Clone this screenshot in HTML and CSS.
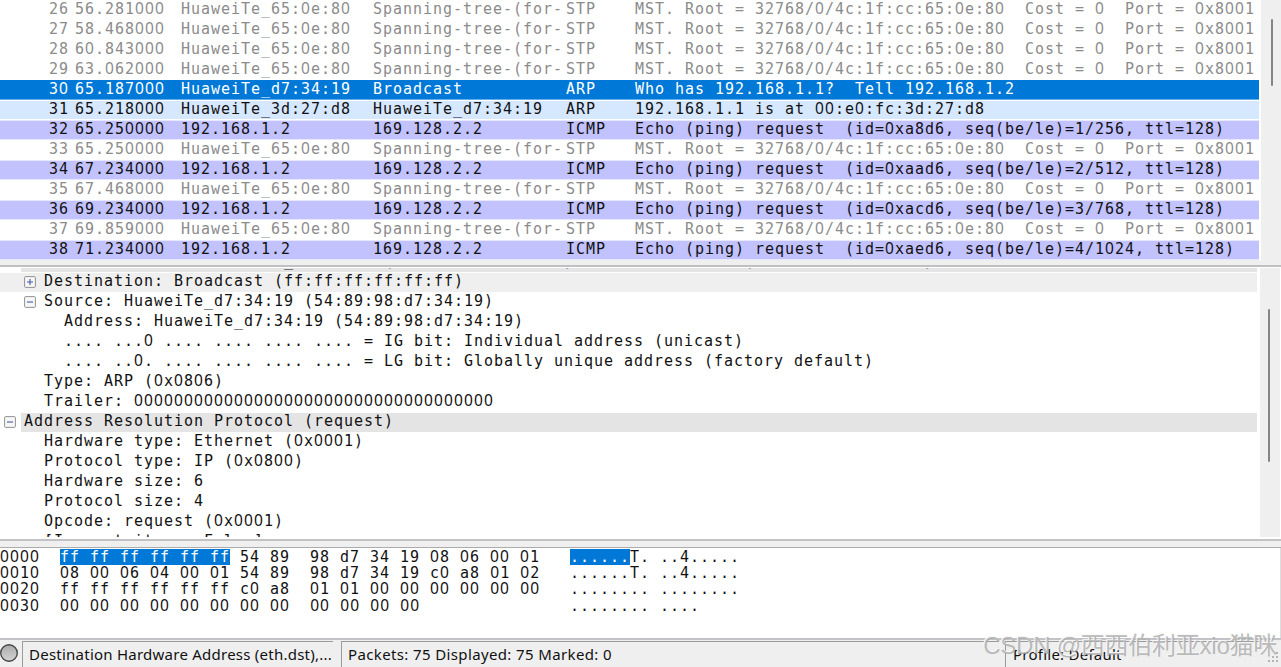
FILE: index.html
```html
<!DOCTYPE html>
<html lang="en">
<head>
<meta charset="utf-8">
<title>Packet capture</title>
<link rel="stylesheet" href="styles.css">
</head>
<body>
<main class="app">
  <section class="list-pane">
    <div class="packets" id="packets"></div>
    <div class="track"><div class="thumb thumb-list"></div></div>
  </section>
  <div class="split split-top"></div>
  <section class="tree-pane">
    <div class="tree" id="tree"></div>
    <div class="track track-tree"><div class="thumb thumb-tree"></div></div>
  </section>
  <div class="split split-bottom"></div>
  <section class="hex-pane" id="hex"></section>
  <footer class="status">
    <div class="lamp-cell"><svg width="20" height="22" viewBox="0 0 20 22"><defs><linearGradient id="lamp" x2="0" y2="1"><stop offset="0" stop-color="#aaa"/><stop offset="1" stop-color="#d5d5d5"/></linearGradient></defs><circle cx="9" cy="11" r="8.3" fill="url(#lamp)" stroke="#484848" stroke-width="1.4"/></svg></div>
    <div class="cell field"><span>Destination Hardware Address (eth.dst),...</span></div>
    <div class="cell counts"><span>Packets: 75 Displayed: 75 Marked: 0</span></div>
    <div class="cell profile"><span>Profile: Default</span></div>
    <svg class="grip" width="12" height="12" viewBox="0 0 12 12"><path d="M8 0h2v2h-2zM4 4h2v2h-2zM8 4h2v2h-2zM0 8h2v2h-2zM4 8h2v2h-2zM8 8h2v2h-2z" fill="#b5b5b5"/></svg>
  </footer>
  <div class="watermark">CSDN @西西伯利亚xio猫咪</div>
</main>
<script src="app.js"></script>
</body>
</html>
```
FILE: styles.css
```css
body { margin: 0; background: #efefef; }
.app {
  position: relative; width: 1281px; height: 667px; overflow: hidden;
  display: flex; flex-direction: column; background: #efefef;
  font: 15px/20px "DejaVu Sans Mono", monospace; letter-spacing: 0.97px; color: #111;
  white-space: pre;
}
/* Plain zeros, spaced to the same 10px cell */
.zero { font-family: "Noto Sans", sans-serif; font-size: 15.5px; line-height: 1px; letter-spacing: 1.13px; }
.list-pane { height: 260px; display: flex; flex: none; }
.packets { width: 1259px; background: #fff; border-right: 2px solid #fff; }
.packet {
  height: 20px; line-height: 16px; box-sizing: border-box;
  border: solid #fff; border-width: 1px 0;
  display: grid; grid-template-columns: 69px 112px 192px 193px 69px 1fr;
}
.packet .no { text-align: right; }
.packet .time { padding-left: 6px; }
.stp { color: #8b8b8b; }
.arp { background: #d6e8ff; }
.icmp { background: #c2c2ff; border-color: #e7e7ff; }
.selected { background: #0078d7; border-color: #0078d7 #0078d7 #62afea; color: #fff; }
.track { width: 20px; background: #efefef; }
.thumb { width: 2px; background: #858585; border-radius: 1px; }
.thumb-list { height: 67px; margin: 19px 0 0 10px; }
.split { flex: none; box-sizing: border-box; background: #efeff0; }
.split-top { height: 7px; border-bottom: 2px solid #bfbfc4; }
.tree-pane {
  height: 272px; flex: none; display: flex; box-sizing: border-box;
  background: #fff; border: solid #fff; border-width: 1px 0 2px; overflow: hidden;
}
.tree { width: 1257px; margin-top: -16px; }
.node { height: 20px; display: flex; }
.node .text { flex: 1; line-height: 19px; }
.gutter { width: 21px; flex: none; display: flex; align-items: center; justify-content: center; box-sizing: border-box; padding-right: 2px; }
.protocol .text { background: #e4e4e4; padding-left: 3px; margin-top: 1px; height: 19px; line-height: 17px; }
.child .gutter { width: 44px; justify-content: flex-start; padding-left: 24px; }
.leaf { padding-left: 64px; }
.hover { background: #efefef; box-shadow: inset 0 1px #fff; }
.box { display: block; }
.track-tree { margin: 0 1px 0 3px; }
.thumb-tree { height: 153px; margin: 41px 0 0 8px; }
.split-bottom { height: 9px; border-top: 2px solid #c3c3c7; border-bottom: 1px solid #acacac; }
.hex-pane {
  height: 90px; flex: none; box-sizing: border-box; background: #fff; line-height: 16.2px;
  padding-top: 1px; border-right: 1px solid #ddd;
}
.hex-row { display: flex; height: 16.2px; }
.hex-row .offset { width: 60px; }
.hex-row .bytes { width: 510px; }
.mark { display: inline-block; height: 16px; background: #0078d7; color: #fff; vertical-align: top; }
.status {
  flex: 1; display: flex; border-top: 2px solid #c3c3c7; background: #efefef; padding-top: 1px;
  font: 15px/25px "Noto Sans", sans-serif; letter-spacing: 0.24px;
}
.lamp-cell { width: 22px; padding-top: 1px; }
.lamp-cell svg { display: block; }
.cell { border-left: 1px solid #9b9b9b; border-top: 1px solid #9b9b9b; box-sizing: border-box; padding-left: 6px; }
.field { width: 311px; margin-right: 1px; }
.counts { width: 658px; margin-left: 7px; letter-spacing: 0.37px; }
.profile { width: 256px; margin-left: 6px; padding-left: 7px; }
.grip { position: absolute; right: 1px; bottom: 3px; }
.watermark {
  position: absolute; right: 4px; top: 632px; font: 24px/27px "Liberation Sans", "Noto Sans CJK SC", sans-serif;
  letter-spacing: -0.25px; color: rgba(170, 170, 170, .8); text-shadow: -1px -1px #f8f8f8;
}
```
FILE: app.js
```js
function write(el, text) {
  text.split(/(0+)/).forEach(part => {
    if (!part) return;
    if (part[0] === '0') {
      const s = document.createElement('span');
      s.className = 'zero';
      s.textContent = part;
      el.append(s);
    } else el.append(part);
  });
  return el;
}
function make(tag, cls, parent) {
  const el = document.createElement(tag);
  el.className = cls;
  parent.append(el);
  return el;
}

const bridge = ['HuaweiTe_65:0e:80', 'Spanning-tree-(for-', 'STP', 'MST. Root = 32768/0/4c:1f:cc:65:0e:80  Cost = 0  Port = 0x8001'];
const ping = (id, seq) => ['192.168.1.2', '169.128.2.2', 'ICMP', `Echo (ping) request  (id=0x${id}, seq(be/le)=${seq}, ttl=128)`];
const packets = [
  ['stp', '26', '56.281000', ...bridge],
  ['stp', '27', '58.468000', ...bridge],
  ['stp', '28', '60.843000', ...bridge],
  ['stp', '29', '63.062000', ...bridge],
  ['selected', '30', '65.187000', 'HuaweiTe_d7:34:19', 'Broadcast', 'ARP', 'Who has 192.168.1.1?  Tell 192.168.1.2'],
  ['arp', '31', '65.218000', 'HuaweiTe_3d:27:d8', 'HuaweiTe_d7:34:19', 'ARP', '192.168.1.1 is at 00:e0:fc:3d:27:d8'],
  ['icmp', '32', '65.250000', ...ping('a8d6', '1/256')],
  ['stp', '33', '65.250000', ...bridge],
  ['icmp', '34', '67.234000', ...ping('aad6', '2/512')],
  ['stp', '35', '67.468000', ...bridge],
  ['icmp', '36', '69.234000', ...ping('acd6', '3/768')],
  ['stp', '37', '69.859000', ...bridge],
  ['icmp', '38', '71.234000', ...ping('aed6', '4/1024')]
];
const columns = ['no', 'time', 'source', 'destination', 'protocol-name', 'info'];
for (const [kind, ...values] of packets) {
  const row = make('div', 'packet ' + kind, document.getElementById('packets'));
  values.forEach((v, i) => write(make('span', columns[i], row), v));
}

const tree = [
  ['protocol', '', 'Ethernet II, Src: HuaweiTe_d7:34:19 (54:89:98:d7:34:19), Dst: Broadcast (ff:ff:ff:ff:ff:ff)'],
  ['child hover', '+', 'Destination: Broadcast (ff:ff:ff:ff:ff:ff)'],
  ['child', '-', 'Source: HuaweiTe_d7:34:19 (54:89:98:d7:34:19)'],
  ['leaf', null, 'Address: HuaweiTe_d7:34:19 (54:89:98:d7:34:19)'],
  ['leaf', null, '.... ...0 .... .... .... .... = IG bit: Individual address (unicast)'],
  ['leaf', null, '.... ..0. .... .... .... .... = LG bit: Globally unique address (factory default)'],
  ['child', '', 'Type: ARP (0x0806)'],
  ['child', '', 'Trailer: 000000000000000000000000000000000000'],
  ['protocol', '-', 'Address Resolution Protocol (request)'],
  ['child', '', 'Hardware type: Ethernet (0x0001)'],
  ['child', '', 'Protocol type: IP (0x0800)'],
  ['child', '', 'Hardware size: 6'],
  ['child', '', 'Protocol size: 4'],
  ['child', '', 'Opcode: request (0x0001)'],
  ['child', '', '[Is gratuitous: False]']
];
for (const [kind, toggle, text] of tree) {
  const row = make('div', 'node ' + kind, document.getElementById('tree'));
  if (toggle !== null) {
    const gutter = make('span', 'gutter', row);
    if (toggle) gutter.innerHTML = '<svg class="box" width="12" height="12" viewBox="0 0 12 12"><rect x=".6" y=".6" width="10.8" height="10.8" rx="1" fill="#f7f7f7" stroke="#929292"/><path d="M3 6h6' + (toggle === '+' ? 'M6 3v6' : '') + '" stroke="#4659a8" stroke-width="1.1"/></svg>';
  }
  write(make('span', 'text', row), text);
}

const hex = [
  ['0000', 'ff ff ff ff ff ff', ' 54 89  98 d7 34 19 08 06 00 01', '......', 'T. ..4.....'],
  ['0010', '', '08 00 06 04 00 01 54 89  98 d7 34 19 c0 a8 01 02', '', '......T. ..4.....'],
  ['0020', '', 'ff ff ff ff ff ff c0 a8  01 01 00 00 00 00 00 00', '', '........ ........'],
  ['0030', '', '00 00 00 00 00 00 00 00  00 00 00 00', '', '........ ....']
];
for (const [offset, markedBytes, bytes, markedText, text] of hex) {
  const row = make('div', 'hex-row', document.getElementById('hex'));
  write(make('span', 'offset', row), offset);
  for (const [cls, marked, rest] of [['bytes', markedBytes, bytes], ['ascii', markedText, text]]) {
    const cell = make('span', cls, row);
    if (marked) write(make('span', 'mark', cell), marked);
    write(cell, rest);
  }
}
```
